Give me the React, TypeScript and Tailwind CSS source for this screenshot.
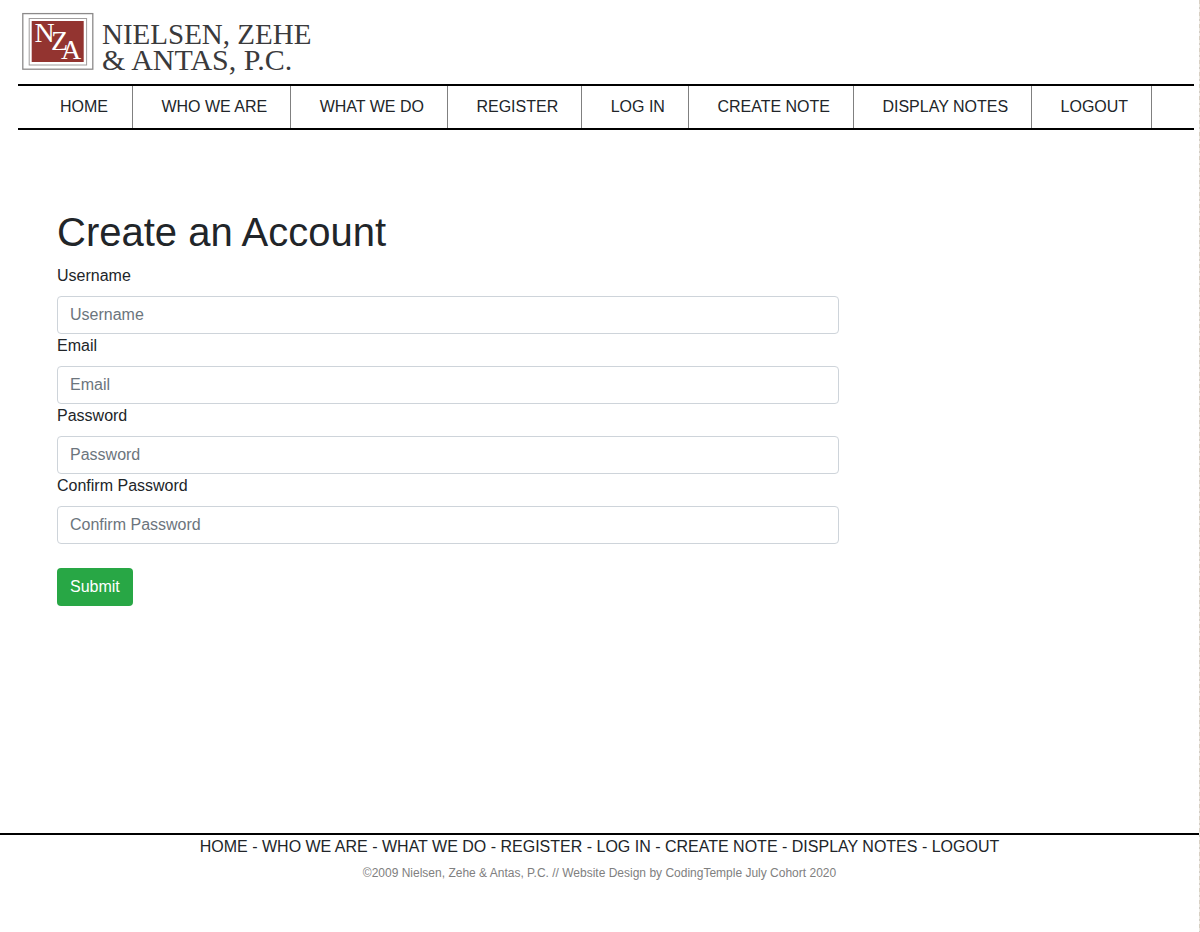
import { Fragment } from 'react';

const links = ['HOME', 'WHO WE ARE', 'WHAT WE DO', 'REGISTER', 'LOG IN', 'CREATE NOTE', 'DISPLAY NOTES', 'LOGOUT'];

const fields = [
  { id: 'username', label: 'Username', type: 'text' },
  { id: 'email', label: 'Email', type: 'email' },
  { id: 'password', label: 'Password', type: 'password' },
  { id: 'confirm', label: 'Confirm Password', type: 'password' },
];

function Logo() {
  return (
    <a href="#" className="flex w-fit items-start gap-2 text-[#3a3a3c]">
      <svg width="72" height="58" viewBox="0 0 72 58" className="shrink-0" aria-hidden="true">
        <rect x="0.8" y="1.6" width="70" height="55.6" fill="#fff" stroke="#8c8a8a" strokeWidth="1.3" />
        <rect x="7.2" y="6.5" width="57.4" height="46.5" fill="#fff" stroke="#a09d9d" strokeWidth="1" />
        <rect x="9.7" y="9" width="52" height="41" fill="#933430" />
        <g fill="#fff" fontSize="28" className="font-['Liberation_Serif',serif]">
          <text x="12.5" y="30">N</text>
          <text x="29" y="38">Z</text>
          <text x="39" y="47">A</text>
        </g>
      </svg>
      <span className="flex flex-col pt-[9px] font-['Liberation_Serif',serif] leading-[26px]">
        <span className="text-[29px]">NIELSEN, ZEHE</span>
        <span className="text-[30px]">&amp; ANTAS, P.C.</span>
      </span>
    </a>
  );
}

export default function App() {
  return (
    <div className="bg-[#ded6ca] bg-[repeating-linear-gradient(180deg,#d8cfc2_0_4px,#ebe6dd_4px_7px,#d2ccc4_7px_9px,#f0ece6_9px_12px)] pr-px">
      <div className="flex min-h-screen flex-col bg-white font-['Liberation_Sans',Arial,sans-serif] text-base text-[#212529]">
        <header className="pl-[18px] pr-[5px] pt-3">
          <div className="h-[72px] pl-1">
            <Logo />
          </div>
          <nav className="border-y-2 border-black pl-[18px]">
            <ul>
              {links.map((link) => (
                <Fragment key={link}>
                  <li className="inline-block border-r border-[#808080] py-[9px] pl-6 pr-[23px] align-top whitespace-nowrap first:pr-6">
                    <a href="#">{link}</a>
                  </li>{' '}
                </Fragment>
              ))}
            </ul>
          </nav>
        </header>

        <main className="px-[57px] pt-[78px]">
          <h1 className="mb-2 text-[40px] leading-[48px]">Create an Account</h1>
          <form className="max-w-[782px]" onSubmit={(e) => e.preventDefault()}>
            {fields.map((f) => (
              <div key={f.id}>
                <label htmlFor={f.id} className="mb-2 block">
                  {f.label}
                </label>
                <input
                  id={f.id}
                  type={f.type}
                  placeholder={f.label}
                  className="block h-[38px] w-full rounded border border-[#ced4da] px-3 placeholder:text-[#6c757d]"
                />
              </div>
            ))}
            <button type="submit" className="mt-6 block h-[38px] rounded bg-[#28a745] px-[13px] text-white">
              Submit
            </button>
          </form>
        </main>

        <footer className="mt-[227px] border-t-2 border-black text-center">
          <p>
            {links.map((link, i) => (
              <span key={link}>
                {i > 0 && ' - '}
                <a href="#">{link}</a>
              </span>
            ))}
          </p>
          <p className="mt-1 text-xs leading-5 text-[#808080]">
            ©2009 Nielsen, Zehe &amp; Antas, P.C. // Website Design by CodingTemple July Cohort 2020
          </p>
        </footer>
      </div>
    </div>
  );
}
